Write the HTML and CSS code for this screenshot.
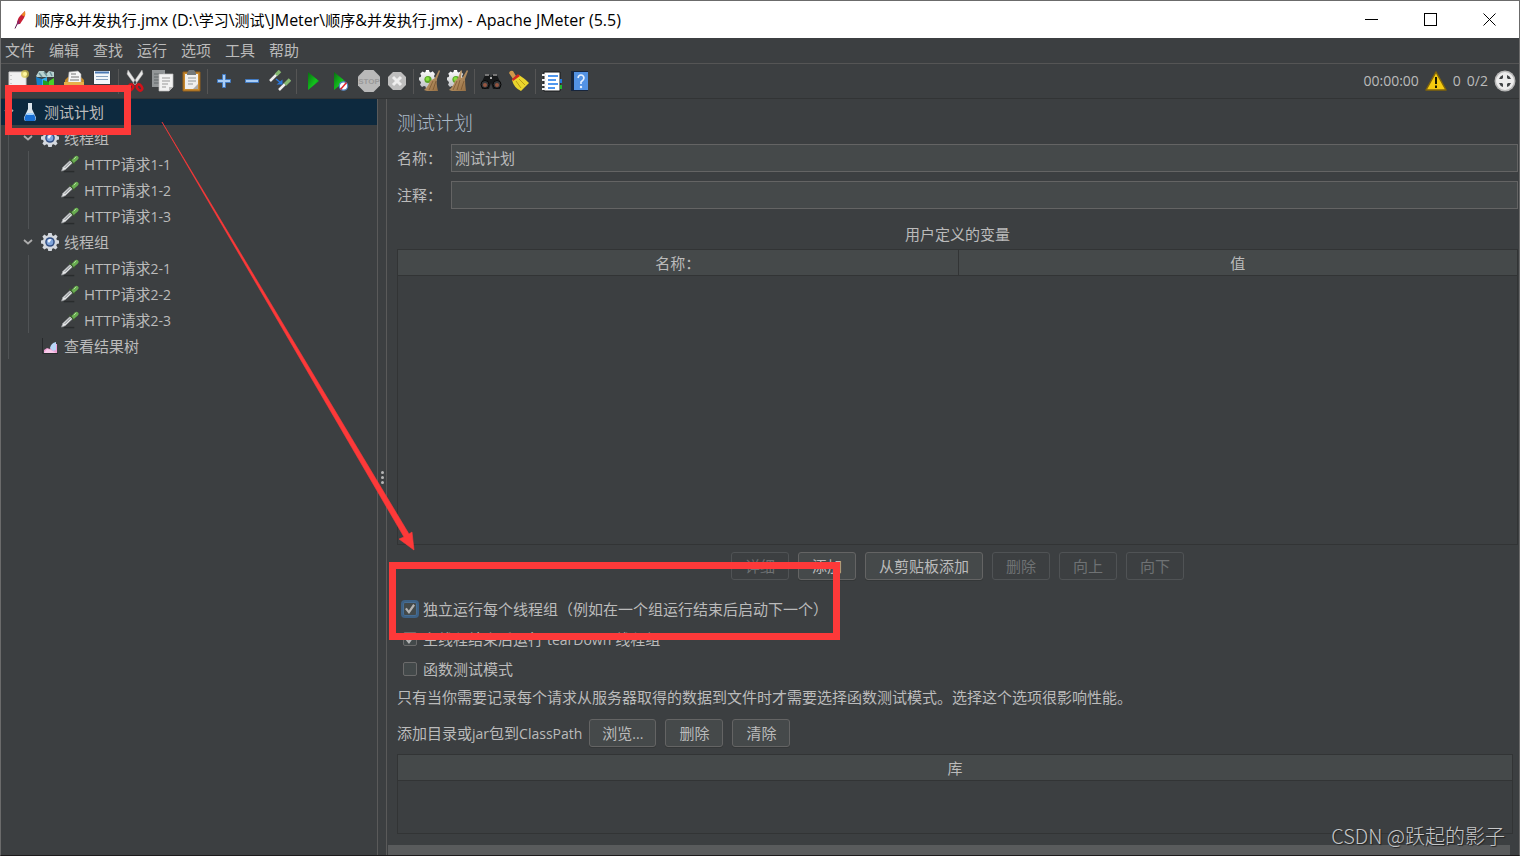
FILE: index.html
```html
<!DOCTYPE html>
<html lang="zh-CN">
<head>
<meta charset="utf-8">
<title>Apache JMeter (5.5)</title>
<link rel="stylesheet" href="styles.css">
</head>
<body>
<svg class="defs" aria-hidden="true">
  <defs>
    <linearGradient id="play-green" x1="0" y1="0" x2="1" y2="1"><stop offset="0" stop-color="#0a6d12"/><stop offset=".6" stop-color="#12c41d"/><stop offset="1" stop-color="#087b10"/></linearGradient>
    <linearGradient id="metal" x1="0" y1="0" x2="0" y2="1"><stop offset="0" stop-color="#fff"/><stop offset="1" stop-color="#b9bcc0"/></linearGradient>
    <linearGradient id="straw" x1="0" y1="0" x2="1" y2="1"><stop offset="0" stop-color="#d0ad7c"/><stop offset="1" stop-color="#916a3f"/></linearGradient>
    <symbol id="gear" viewBox="0 0 18 18">
      <path d="M7.300 0h3.400l.5 2.300 1.300.6 2.100-1.300 2 2-1.300 2.100.6 1.300 2.100.4v3.200l-2.100.500-.6 1.300 1.300 2.100-2 2-2.100-1.300-1.300.6-.5 2.200H7.300l-.5-2.200-1.300-.6-2.100 1.300-2-2 1.300-2.100-.6-1.300L0 10.600V7.400L2.100 7l.6-1.300-1.300-2.100 2-2 2.100 1.300 1.300-.6z" fill="#d5d9df"/>
      <circle cx="9" cy="9" r="4.800" fill="#334f83"/><circle cx="9" cy="9" r="3.300" fill="#7fa4da"/><path d="M6.500 8a3 3 0 0 1 4-1.600L8 10z" fill="#eef4ff"/>
    </symbol>
    <symbol id="dropper" viewBox="0 0 19 18">
      <path d="M3 17h11" stroke="#292c2d" stroke-width="1.500"/>
      <path d="M.5 16.500l1.500-4L10.500 4.500l2.500 2.500-8.500 8z" fill="#e5e6e7" stroke="#9ba0a3" stroke-width=".7"/>
      <path d="M4 13l6-6" stroke="#6a7175" stroke-width="1"/>
      <path d="M9 3.500L14.500 9" stroke="#39552e" stroke-width="2"/>
      <path d="M11 5l3.500-3.800Q16.500-.5 18 1t-.5 3.500L13.500 8z" fill="#68ad50"/><path d="M13.500 4l2.500-2.500" stroke="#b5dda2"/>
    </symbol>
    <symbol id="chevron" viewBox="0 0 10 6"><path d="M1 1l4 3.500L9 1" fill="none" stroke="#adadad" stroke-width="1.800"/></symbol>
    <symbol id="broomgear" viewBox="0 0 22 22">
      <path d="M7 0h3l.5 2 1.300.5 1.900-1.200L16 4l-1 2 .5 1.500 2 .5v3l-2 .6-.6 1.400 1 2-2.300 2-1.900-1-1.200.5-.5 2H7l-.5-2-1.500-.6-2 1-2-2.200 1-1.900-.5-1.300L0 10V7.500l1.700-.6.5-1.400-1-1.800L3.500 1.500l2 1L6.500 2z" fill="url(#metal)"/>
      <circle cx="9" cy="9.500" r="3.600" fill="#5ba626"/><circle cx="8.500" cy="9" r="2" fill="#86e03f"/>
    </symbol>
  </defs>
</svg>

<div class="window">
  <header class="titlebar">
    <svg class="feather" viewBox="0 0 14 20"><path d="M2 18.500L5 12" stroke="#5d1c4f"/><path d="M4 14Q4 9 7.500 5.500L12 1q.8 4-1 7L7 14z" fill="#c92036"/><path d="M8.500 5L12 1q.8 3-.5 5.500z" fill="#ee8d25"/><path d="M4 14.500Q4 11 6 9l.5 5z" fill="#86236b"/></svg>
    <h1 class="title"><span class="cjk">顺序</span>&amp;<span class="cjk">并发执行</span>.jmx (D:\<span class="cjk">学习</span>\<span class="cjk">测试</span>\JMeter\<span class="cjk">顺序</span>&amp;<span class="cjk">并发执行</span>.jmx) - Apache JMeter (5.5)</h1>
    <div class="window-controls">
      <button type="button" aria-label="最小化"><svg viewBox="0 0 13 13"><path d="M0 6.500h13"/></svg></button>
      <button type="button" aria-label="最大化"><svg viewBox="0 0 13 13"><path d="M.5.5h12v12H.5z"/></svg></button>
      <button type="button" aria-label="关闭"><svg viewBox="0 0 13 13"><path d="M.5.5l12 12M12.500.5l-12 12"/></svg></button>
    </div>
  </header>

  <nav class="menubar">
    <button type="button">文件</button><button type="button">编辑</button><button type="button">查找</button><button type="button">运行</button><button type="button">选项</button><button type="button">工具</button><button type="button">帮助</button>
  </nav>

  <div class="toolbar">
    <div class="tools">
      <button type="button" aria-label="新建"><svg viewBox="0 0 22 22"><path d="M2 2h17v18H2z" fill="#f1f1f1" stroke="#cfcfcf"/><path d="M4 5v14" stroke="#aaa" stroke-dasharray="1 3"/><circle cx="18" cy="4" r="4" fill="#d9c84a" opacity=".7"/><circle cx="18" cy="4" r="2" fill="#fff79c"/></svg></button>
      <button type="button" aria-label="模板"><svg viewBox="0 0 22 22"><path d="M1 6l3-5h5l2 3 3-3 5 1v5H2z" fill="#b9d3d2"/><path d="M4 3l3 4M9 2l3 4M15 2l2 4" stroke="#6d9297" stroke-width="1.500"/><path d="M1 7l6 2v11l-5-4z" fill="#1780ca"/><path d="M7 9l5-2v12l-5 2z" fill="#37aee9"/><path d="M8 10l6 2v10H8z" fill="#219f20"/><path d="M14 11l5-3v12l-5 2z" fill="#4bd128"/></svg></button>
      <button type="button" aria-label="打开"><svg viewBox="0 0 22 22"><path d="M2 10l3-3h13l3 3v11H2z" fill="#c98b25"/><path d="M6 2l9-1 3 3v9H5z" fill="#f6f6f6" stroke="#a7a7a7" stroke-width=".6"/><path d="M8 4h5M8 7h8M7 10h9" stroke="#777"/><path d="M1 12h20v9H1z" fill="#e7b04a"/></svg></button>
      <button type="button" aria-label="保存"><svg viewBox="0 0 22 22"><path d="M2 1h18v20H2z" fill="#35393d"/><path d="M3 1h16v13H3z" fill="#f3f7fa"/><path d="M4 2.500h14" stroke="#4a79b4" stroke-width="2"/><path d="M5 6.500h12M5 9.500h12" stroke="#87a2bf"/><path d="M5 15h12v6H5z" fill="#c5c9cc"/><path d="M7 16h2v4H7z" fill="#4e5254"/></svg></button>
      <span class="separator"></span>
      <button type="button" aria-label="剪切"><svg viewBox="0 0 22 22"><path d="M4 0l9 13-2 2L3 4zM18 0L9 13l2 2 8-11z" fill="#e8e8e8" stroke="#aaa" stroke-width=".5"/><ellipse cx="6.500" cy="17.500" rx="2.300" ry="3.300" transform="rotate(35 6.500 17.500)" fill="none" stroke="#d41119" stroke-width="2.500"/><ellipse cx="15.500" cy="17.500" rx="2.300" ry="3.300" transform="rotate(-35 15.500 17.500)" fill="none" stroke="#d41119" stroke-width="2.500"/></svg></button>
      <button type="button" aria-label="复制"><svg viewBox="0 0 22 22"><path d="M0 0h13v17H0z" fill="#929698"/><path d="M2 4h9M2 7h5M2 10h5M2 13h5" stroke="#63686a"/><path d="M7 4h14v13l-4 4H7z" fill="#f2f2f2" stroke="#bbb" stroke-width=".7"/><path d="M10 8h8M10 11h8M10 14h6M10 17h4" stroke="#999"/><path d="M17 21v-4h4z" fill="#bbb"/></svg></button>
      <button type="button" aria-label="粘贴"><svg viewBox="0 0 22 22"><path d="M3 2h17v19H3z" fill="#c7892f" stroke="#94601d"/><path d="M5 4h13v15H5z" fill="#efefef"/><path d="M7 3l2-3h5l2 3v2H7z" fill="#74797b"/><path d="M8 8h8M8 11h8M8 14h5" stroke="#92989a"/><path d="M13 19l5-5v5z" fill="#aaa"/></svg></button>
      <span class="separator"></span>
      <button type="button" aria-label="展开"><svg viewBox="0 0 22 22"><path d="M9.500 4.500h3v5h5v3h-5v5h-3v-5h-5v-3h5z" fill="#a9cdf5" stroke="#4179c0"/></svg></button>
      <button type="button" aria-label="折叠"><svg viewBox="0 0 22 22"><path d="M4.500 9.500h13v3h-13z" fill="#a9cdf5" stroke="#4179c0"/></svg></button>
      <button type="button" aria-label="切换"><svg viewBox="0 0 22 22"><path d="M1 11l7-7" stroke="#eee" stroke-width="2.500"/><path d="M7 5l4-4" stroke="#86b972" stroke-width="3.500"/><path d="M10 20l6-6" stroke="#eee" stroke-width="2.500"/><path d="M16 14.500l5-5" stroke="#86b972" stroke-width="3.500"/><path d="M7 9l5 4" stroke="#2c78dc" stroke-width="1.500"/><path d="M13.500 9.500v5h-6z" fill="#2c78dc"/></svg></button>
      <span class="separator"></span>
      <button type="button" aria-label="启动"><svg viewBox="0 0 22 22"><path d="M6 2l11 9L6 20z" fill="url(#play-green)"/></svg></button>
      <button type="button" aria-label="无间隔启动"><svg viewBox="0 0 22 22"><path d="M4 2l11 9L4 20z" fill="url(#play-green)"/><circle cx="13.500" cy="16" r="4.200" fill="#fff" stroke="#5385c4" stroke-width="1.200"/><path d="M10.500 19.500l6-7" stroke="#e0252b" stroke-width="1.500"/></svg></button>
      <button type="button" aria-label="停止" disabled><svg viewBox="0 0 22 22"><path d="M6.500 0h9L22 6.500v9L15.500 22h-9L0 15.500v-9z" fill="#b9b9b9"/><text class="stop-text" x="11" y="14" text-anchor="middle">STOP</text></svg></button>
      <button type="button" aria-label="关闭测试" disabled><svg viewBox="0 0 22 22"><path d="M7 2h8l5 5v8l-5 5H7l-5-5V7z" fill="#bebebe"/><path d="M7 7l8 8M15 7l-8 8" stroke="#eee" stroke-width="3"/></svg></button>
      <span class="separator"></span>
      <button type="button" aria-label="清除"><svg viewBox="0 0 22 22"><use href="#broomgear"/><path d="M20 0l1 1-3 8q-1 4 1 12H8l-3-1q4-3 6-9l5-3z" fill="url(#straw)"/><path d="M14 11l-4 9M17 11l-3 9" stroke="#6e4a25" stroke-width=".6"/></svg></button>
      <button type="button" aria-label="清除全部"><svg viewBox="0 0 22 22"><use href="#broomgear"/><path d="M14 0l1 1-1 7 2-1 4-7 1 1-3 8q0 5 1 12H5l-3-1q4-3 6-9l3-3z" fill="url(#straw)"/><path d="M10 11l-4 9M13 10l-3 10M17 11l-3 9" stroke="#6e4a25" stroke-width=".6"/></svg></button>
      <span class="separator"></span>
      <button type="button" aria-label="查找"><svg viewBox="0 0 22 22"><path d="M5 5h5l1 4 1-4h5l4 9-1 5h-7l-2-6-2 6H2l-1-5z" fill="#17191a"/><path d="M5 5h4M13 5h4" stroke="#777" stroke-width="2"/><circle cx="5" cy="14.500" r="4" fill="#34383b" stroke="#050505"/><circle cx="17" cy="14.500" r="4" fill="#34383b" stroke="#050505"/><circle cx="5" cy="15" r="2" fill="#965640"/><circle cx="17" cy="15" r="2" fill="#965640"/><path d="M10 8h2" stroke="#aaa" stroke-width="2"/></svg></button>
      <button type="button" aria-label="重置查找"><svg viewBox="0 0 22 22"><path d="M1 3q1-3 4-2l3 5-3 3z" fill="#d09749"/><path d="M4 10l7-5q5 3 10 8l-8 8q-7-3-9-11z" fill="#ead52c"/><path d="M4 9l6-5 2 2-7 5z" fill="#d32920"/><path d="M8 11l5 7M11 9l6 6" stroke="#b79a18"/></svg></button>
      <span class="separator"></span>
      <button type="button" aria-label="函数助手"><svg viewBox="0 0 22 22"><path d="M3 2h16v19H3z" fill="#fff" stroke="#16191a"/><path d="M7 6h10M7 10h8M7 14h10M7 18h7" stroke="#1876e9" stroke-width="1.500"/><path d="M1 5h4M1 10h4M1 15h4M1 19h4" stroke="#eee" stroke-width="2"/><path d="M19 9h2v4h-2z" fill="#2476d9"/><path d="M19 15h2v4h-2z" fill="#20b62d"/></svg></button>
      <button type="button" aria-label="帮助"><svg viewBox="0 0 22 22"><path d="M2 1h17v20H2z" fill="#17253c"/><path d="M5 2h14v18H5z" fill="#5392e3"/><path d="M9 8q.5-3 3-3t3 3q0 2-3 4v2" fill="none" stroke="#e7f1ff" stroke-width="1.600"/><circle cx="12" cy="17" r="1.200" fill="#e7f1ff"/></svg></button>
    </div>
    <div class="status">
      <span>00:00:00</span>
      <svg class="warning" viewBox="0 0 22 20"><path d="M11 1l10 18H1z" fill="#f5cb10" stroke="#80640a" stroke-width="1.500" stroke-linejoin="round"/><path d="M11 6v7M11 14.500V17" stroke="#191700" stroke-width="2"/></svg>
      <span>0</span>
      <span>0/2</span>
      <svg class="indicator" viewBox="0 0 22 22"><circle cx="11" cy="11" r="10.500" fill="#b8b8b8"/><circle cx="11" cy="11" r="9" fill="#ececec"/><path d="M5 9q1-3 4-4v3L8 9zM13 5q3 1 4 4h-3l-1-1zM5 13h3l1 1v3q-3-1-4-4zM14 13h3q-1 3-4 4v-3z" fill="#414446"/></svg>
    </div>
  </div>

  <div class="workspace">
    <aside class="tree">
      <div class="node selected"><svg class="chev" viewBox="0 0 10 6"><use href="#chevron"/></svg><svg class="flask" viewBox="0 0 12 18"><path d="M4 0h4v6l4 8.500q0 3.500-2 3.500H2q-2 0-2-3.500L4 6z" fill="#dce6ec"/><path d="M2 11h8l1.500 4Q11.500 18 10 18H2Q.5 18 .5 15z" fill="#176fd4"/><path d="M3 10h6l1 2H2z" fill="#9fd2ff"/></svg><span>测试计划</span></div>
      <div class="branch">
        <div class="node"><svg class="chev" viewBox="0 0 10 6"><use href="#chevron"/></svg><svg class="icon"><use href="#gear"/></svg><span>线程组</span></div>
        <div class="branch leaves">
          <div class="node"><svg class="icon"><use href="#dropper"/></svg><span>HTTP请求<span class="latin">1-1</span></span></div>
          <div class="node"><svg class="icon"><use href="#dropper"/></svg><span>HTTP请求<span class="latin">1-2</span></span></div>
          <div class="node"><svg class="icon"><use href="#dropper"/></svg><span>HTTP请求<span class="latin">1-3</span></span></div>
        </div>
        <div class="node"><svg class="chev" viewBox="0 0 10 6"><use href="#chevron"/></svg><svg class="icon"><use href="#gear"/></svg><span>线程组</span></div>
        <div class="branch leaves">
          <div class="node"><svg class="icon"><use href="#dropper"/></svg><span>HTTP请求<span class="latin">2-1</span></span></div>
          <div class="node"><svg class="icon"><use href="#dropper"/></svg><span>HTTP请求<span class="latin">2-2</span></span></div>
          <div class="node"><svg class="icon"><use href="#dropper"/></svg><span>HTTP请求<span class="latin">2-3</span></span></div>
        </div>
        <div class="node result"><svg class="icon" viewBox="0 0 18 18"><path d="M1.500 1v15.500H17" fill="none" stroke="#282a2c"/><path d="M3 16v-3l3-2 3 1 3-5h4v9z" fill="#ef9fd4"/><path d="M9 11q1-5 6-6v8l-3 1z" fill="#b8d6f8"/><path d="M3 16l3-4 4 1 5 3z" fill="#f8cbea"/></svg><span>查看结果树</span></div>
      </div>
    </aside>
    <div class="splitter"><i></i><i></i><i></i></div>

    <main class="panel">
      <form class="plan">
        <h2>测试计划</h2>
        <div class="field"><label for="name">名称：</label><input id="name" type="text" value="测试计划"></div>
        <div class="field"><label for="comment">注释：</label><input id="comment" type="text"></div>
        <table class="grid variables">
          <caption>用户定义的变量</caption>
          <thead><tr><th>名称：</th><th>值</th></tr></thead>
          <tbody><tr><td colspan="2"></td></tr></tbody>
        </table>
        <div class="actions">
          <button type="button" disabled>详细</button><button type="button">添加</button><button type="button">从剪贴板添加</button><button type="button" disabled>删除</button><button type="button" disabled>向上</button><button type="button" disabled>向下</button>
        </div>
        <div class="options">
          <label><input class="focused" type="checkbox" checked>独立运行每个线程组（例如在一个组运行结束后启动下一个）</label>
          <label><input type="checkbox" checked><span>主线程结束后运行 <span class="latin">tearDown</span> 线程组</span></label>
          <label><input type="checkbox">函数测试模式</label>
        </div>
        <p class="hint">只有当你需要记录每个请求从服务器取得的数据到文件时才需要选择函数测试模式。选择这个选项很影响性能。</p>
        <div class="classpath">
          <span>添加目录或<span class="latin">jar</span>包到<span class="latin">ClassPath</span></span>
          <button type="button" class="browse">浏览<span class="latin">...</span></button><button type="button">删除</button><button type="button">清除</button>
        </div>
        <table class="grid library">
          <thead><tr><th>库</th></tr></thead>
          <tbody><tr><td></td></tr></tbody>
        </table>
      </form>
      <div class="scrollbar"></div>
    </main>
  </div>
  <svg class="annotations" viewBox="0 0 860 660" aria-hidden="true">
    <path d="M8.500 88.500h119v43H8.500zM392.500 565.500h444v71h-444z" fill="none" stroke="#fd3939" stroke-width="7"/>
    <path d="M162 122L409 534l3-2 2 18-15-11 5-2z" fill="#fd3939" stroke="#fd3939" stroke-width=".6"/>
  </svg>
  <div class="watermark">CSDN @跃起的影子</div>
</div>
</body>
</html>
```
FILE: styles.css
```css
* { box-sizing: border-box; }

body {
  margin: 0;
  background: #3c3f41;
  color: #bbb;
  font: 15px/20px "Open Sans", "Noto Sans CJK SC", sans-serif;
}

button, input { font: inherit; color: inherit; }
svg { display: block; flex: none; }
.defs { position: absolute; width: 0; height: 0; }

.window {
  position: relative;
  display: flex;
  flex-direction: column;
  height: 100vh;
  overflow: hidden;
  border: 1px solid #6b6b6b;
  border-bottom-color: #1c1a1b;
}

.titlebar {
  display: flex;
  align-items: center;
  flex: none;
  height: 37px;
  padding-left: 12px;
  background: #fff;
  color: #000;
}
.feather { width: 14px; height: 20px; }
.title { flex: 1; margin: 0 0 0 8px; font-size: 16px; font-weight: 400; white-space: nowrap; }
.title .cjk { font-size: 15px; }
.window-controls { display: flex; }
.window-controls button {
  display: grid;
  place-items: center;
  width: 59px;
  height: 37px;
  padding: 0;
  border: 0;
  background: none;
}
.window-controls svg { width: 13px; height: 13px; fill: none; stroke: #000; shape-rendering: crispEdges; }
.window-controls button:last-child svg { shape-rendering: auto; }

.menubar { display: flex; flex: none; height: 26px; border-bottom: 1px solid #555; }
.menubar button { width: 44px; padding: 0 0 2px 4px; border: 0; background: none; text-align: left; }

.toolbar {
  display: flex;
  align-items: center;
  justify-content: space-between;
  flex: none;
  height: 35px;
  padding: 0 3px;
  border-bottom: 1px solid #323435;
}
.tools, .status { display: flex; align-items: center; }
.tools button { display: grid; place-items: center; width: 28px; height: 28px; padding: 0; border: 0; background: none; }
.tools svg { width: 22px; height: 22px; }
.separator { width: 1px; height: 25px; margin: 0 2px; background: #555; }
.stop-text { font: bold 8px "Liberation Sans", sans-serif; fill: #999; }
.status { gap: 6px; font-size: 14px; }
.warning { width: 22px; height: 20px; }
.indicator { width: 22px; height: 22px; }

.workspace { display: flex; flex: 1; min-height: 0; }
.tree { flex: none; width: 377px; border-right: 1px solid #5a5a5a; }
.node { display: flex; align-items: center; height: 26px; gap: 5px; white-space: nowrap; }
.selected { padding-left: 3px; gap: 8px; background: #0d293e; }
.selected .flask { margin-left: 2px; }
.chev { width: 10px; height: 6px; }
.icon { width: 18px; height: 18px; }
.flask { width: 12px; height: 18px; }
.branch { margin-left: 7px; border-left: 1px solid #505355; }
.branch > .node { padding-left: 14px; }
.branch > .node .chev { margin-right: 3px; }
.branch.leaves { margin-left: 19px; }
.branch.leaves > .node { padding-left: 32px; }
.branch > .result { padding-left: 32px; }

.splitter {
  display: flex;
  flex-direction: column;
  align-items: center;
  justify-content: center;
  flex: none;
  gap: 2px;
  width: 9px;
  border-right: 1px solid #5a5a5a;
}
.splitter i { width: 3px; height: 3px; border-radius: 50%; background: #b5b5b5; }

.panel { display: flex; flex: 1; flex-direction: column; min-width: 0; }
.plan { display: flex; flex: 1; flex-direction: column; min-height: 0; padding: 10px 1px 11px 10px; }
.plan h2 { margin: 0 0 7px; color: #a9b7c6; font-size: 19px; font-weight: 300; line-height: 28px; }
.field { display: flex; align-items: center; margin-bottom: 9px; }
.field label { width: 54px; }
.field input {
  flex: 1;
  min-width: 0;
  height: 28px;
  padding: 0 3px 2px;
  border: 1px solid #646464;
  background: #45494a;
}

.grid { border: 1px solid #323435; border-spacing: 0; table-layout: fixed; }
.grid caption { padding: 6px 0 5px; line-height: 20px; }
.grid th { height: 26px; padding: 0; border-bottom: 1px solid #323435; background: #45494a; font-weight: inherit; }
.grid th + th { border-left: 1px solid #323435; }
.grid td { padding: 0; }
.variables { width: 100%; }
.variables td { height: 268px; }
.library { width: calc(100% - 5px); }
.library td { height: 52px; }

.actions { display: flex; justify-content: center; gap: 9px; margin-top: 7px; }
.actions button, .classpath button {
  height: 28px;
  padding: 0 13px;
  border: 1px solid #646464;
  border-radius: 3px;
  background: #45494a;
  box-shadow: 0 1px #343738;
}
.actions button:disabled { border-color: #505355; background: none; box-shadow: none; color: #6f7274; }

.options { display: flex; flex-direction: column; margin-top: 14px; }
.options label { display: flex; align-items: center; gap: 6px; height: 30px; padding-left: 6px; }
.options input {
  display: grid;
  place-items: center;
  width: 14px;
  height: 14px;
  margin: 0;
  appearance: none;
  border: 1px solid #6b6b6b;
  border-radius: 2px;
  background: #43494a;
}
.options input:checked::before {
  content: "";
  width: 10px;
  height: 10px;
  background: #b4b4b4;
  clip-path: polygon(0 50%, 18% 38%, 38% 64%, 82% 0, 100% 14%, 40% 100%);
}
.options .focused { border-color: #466d94; box-shadow: 0 0 0 2px #3d6185; }

.hint { margin: 3px 0 12px; white-space: nowrap; }
.classpath { display: flex; align-items: center; gap: 9px; margin-bottom: 7px; }
.classpath > span { margin-right: -2px; white-space: nowrap; }
.classpath .browse { padding: 0 12px; }
.latin { font-size: 14px; }
.scrollbar { flex: none; height: 10px; margin: 0 9px 0 1px; background: #595b5c; }

.annotations { position: absolute; top: -1px; left: -1px; width: 860px; height: 660px; pointer-events: none; }
.watermark {
  position: absolute;
  right: 14px;
  bottom: 7px;
  color: #c6c7c8;
  font: 300 20px/24px "Noto Sans CJK SC", sans-serif;
  text-shadow: 1px 1px 1px #222;
}
```
